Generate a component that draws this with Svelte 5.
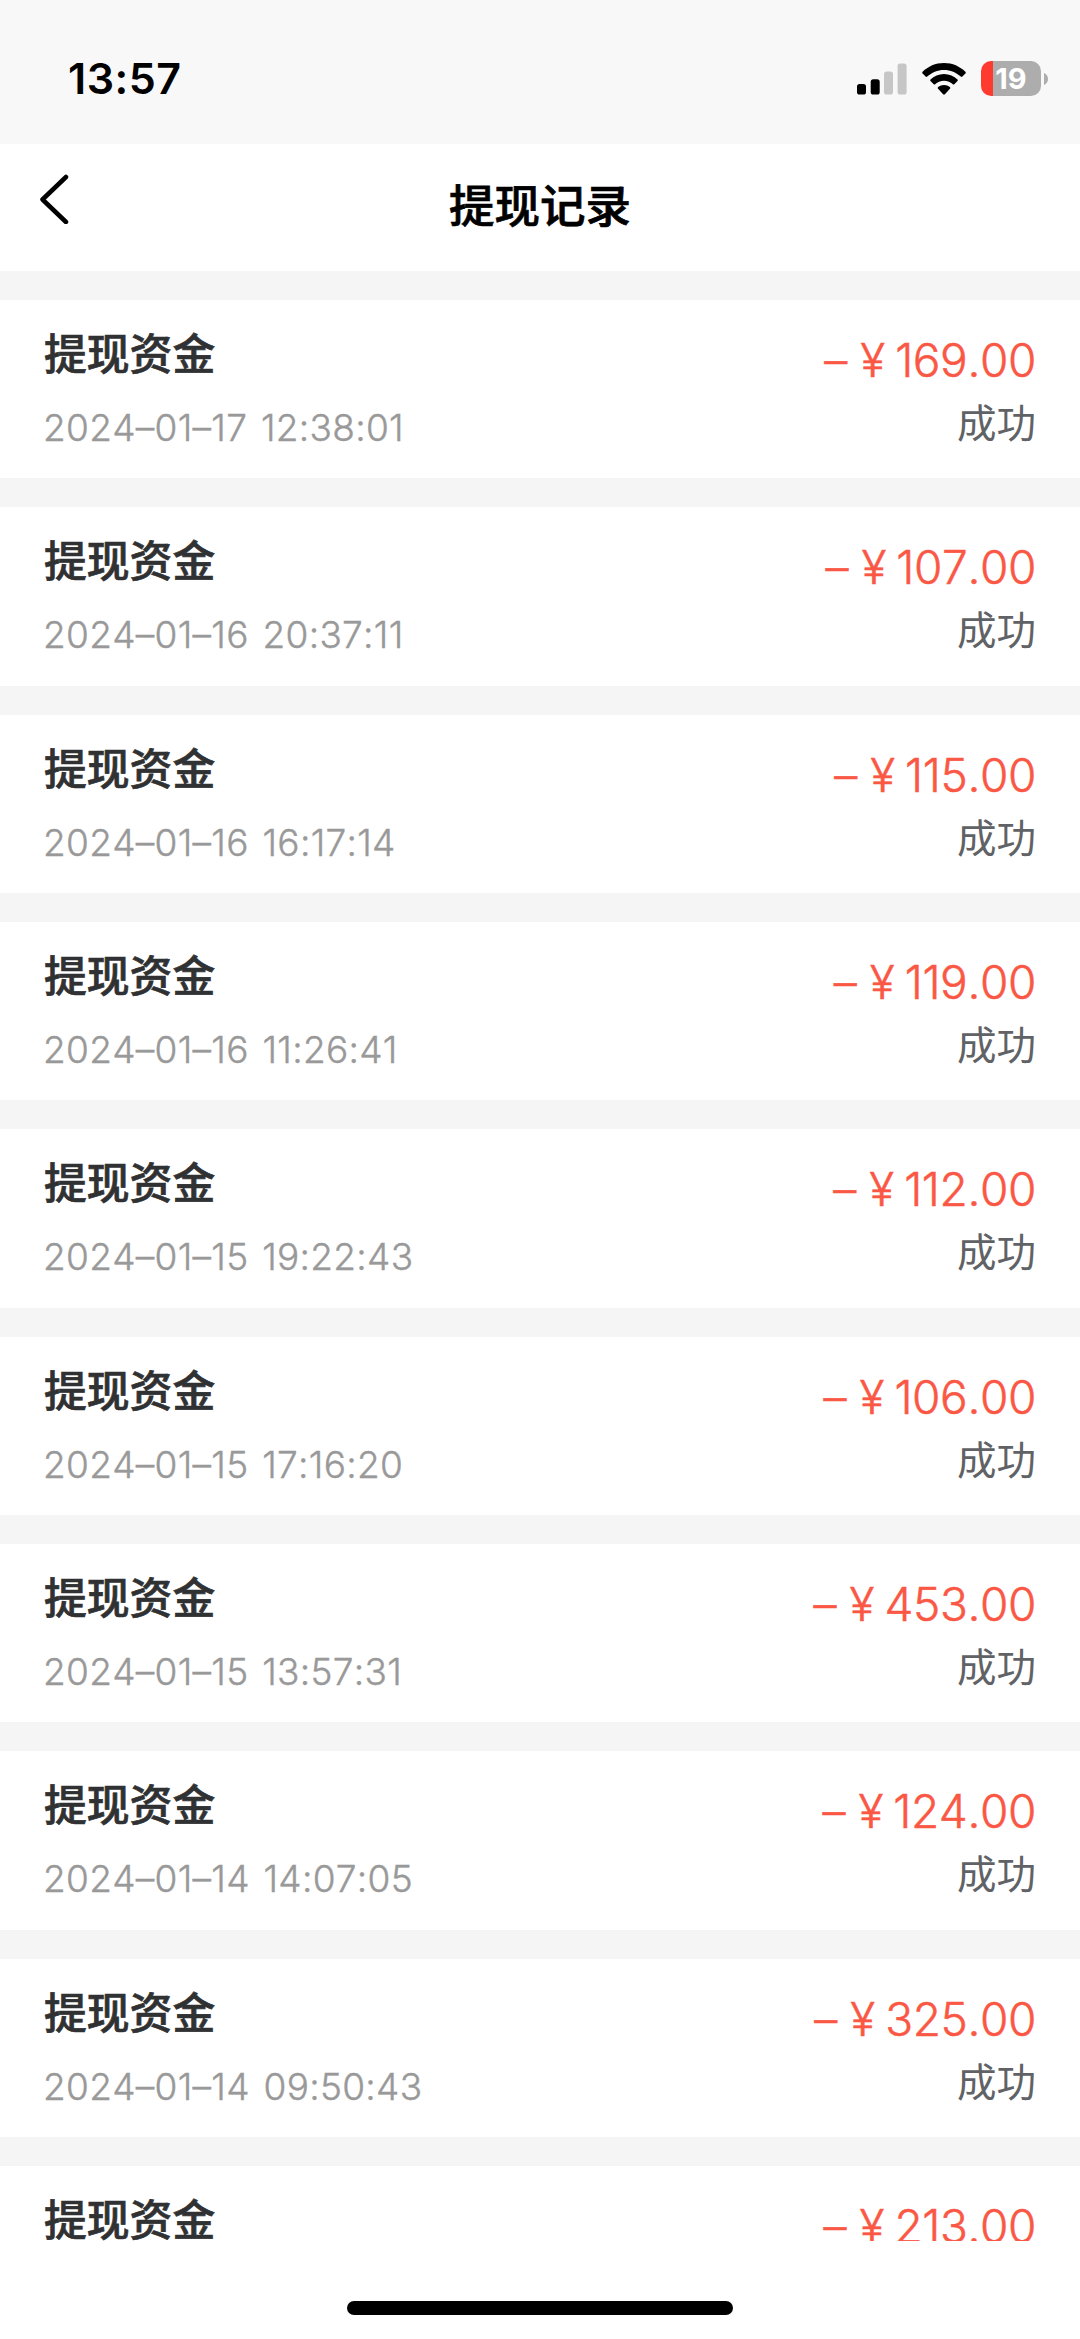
<script lang="ts">
  interface WithdrawRecord {
    time: string;
    amount: string;
  }

  const records: WithdrawRecord[] = [
    { time: "2024–01–17 12:38:01", amount: "169.00" },
    { time: "2024–01–16 20:37:11", amount: "107.00" },
    { time: "2024–01–16 16:17:14", amount: "115.00" },
    { time: "2024–01–16 11:26:41", amount: "119.00" },
    { time: "2024–01–15 19:22:43", amount: "112.00" },
    { time: "2024–01–15 17:16:20", amount: "106.00" },
    { time: "2024–01–15 13:57:31", amount: "453.00" },
    { time: "2024–01–14 14:07:05", amount: "124.00" },
    { time: "2024–01–14 09:50:43", amount: "325.00" },
    { time: "", amount: "213.00" },
  ];
</script>

<div class="screen">
  <div class="status-bar">
    <span class="clock">13:57</span>
    <div class="indicators">
      <svg class="signal" width="50" height="32" viewBox="0 0 50 32">
        <rect x="0" y="21" width="9" height="10.5" rx="2.6" />
        <rect x="13.7" y="16.3" width="9" height="15.2" rx="2.6" />
        <rect class="off" x="27" y="8.5" width="9" height="23" rx="2.6" />
        <rect class="off" x="40.6" y="0.5" width="9" height="31" rx="2.6" />
      </svg>
      <svg class="wifi" width="44" height="32" viewBox="0 0 44 32">
        <path d="M22 0C30.5 0 38 3.4 43.4 8.8Q44.2 9.7 43.4 10.6L40.4 13.6Q39.6 14.3 38.8 13.6C34.4 9.4 28.5 6.9 22 6.9S9.6 9.4 5.2 13.6Q4.4 14.3 3.6 13.6L0.6 10.6Q-0.2 9.7 0.6 8.8C6 3.4 13.5 0 22 0Z" />
        <path d="M22 11C27.3 11 32 13.1 35.5 16.5Q36.3 17.3 35.5 18.1L32.3 21.2Q31.6 21.9 30.8 21.2C28.5 19 25.4 17.7 22 17.7S15.5 19 13.2 21.2Q12.4 21.9 11.7 21.2L8.5 18.1Q7.7 17.3 8.5 16.5C12 13.1 16.7 11 22 11Z" />
        <path d="M22 21.9C24.2 21.9 26.3 22.7 27.9 24.1Q28.7 24.9 27.9 25.8L22.9 31.2Q22 32.1 21.1 31.2L16.1 25.8Q15.3 24.9 16.1 24.1C17.7 22.7 19.8 21.9 22 21.9Z" />
      </svg>
      <div class="battery">
        <div class="cell">19</div>
        <svg width="4" height="12" viewBox="0 0 4 12"><path d="M0 0Q4 1.8 4 6T0 12Z" /></svg>
      </div>
    </div>
  </div>

  <header class="nav">
    <svg class="back" width="30" height="50" viewBox="0 0 30 50">
      <path d="M26 3L2.5 25.5L26 48" />
    </svg>
    <h1>提现记录</h1>
  </header>

  <main class="list">
    {#each records as record}
      <section class="record">
        <div class="info">
          <div class="label">提现资金</div>
          {#if record.time}
            <div class="time">{record.time}</div>
          {/if}
        </div>
        <div class="result">
          <div class="amount">
            <span class="sign">–</span><span class="currency">¥</span><span class="value">{record.amount}</span>
          </div>
          {#if record.time}
            <div class="state">成功</div>
          {/if}
        </div>
      </section>
    {/each}
  </main>

  <footer class="home">
    <div class="home-indicator"></div>
  </footer>
</div>

<style>
  :global(body) {
    background-color: #fff;
  }
  .screen {
    display: flex;
    flex-direction: column;
    width: 1080px;
    height: 2339px;
    overflow: hidden;
    background-color: #fff;
    font-family: Inter, "Noto Sans CJK SC", sans-serif;
  }

  .status-bar {
    display: flex;
    flex: none;
    justify-content: space-between;
    box-sizing: border-box;
    height: 144px;
    padding: 0 32px 0 68px;
    background-color: #f8f8f8;
  }
  .clock {
    height: 157px;
    line-height: 157px;
    font-size: 43px;
    font-weight: 600;
    letter-spacing: 0.5px;
  }
  .indicators {
    display: flex;
    align-items: center;
    height: 157px;
  }
  .wifi {
    margin-left: 15px;
  }
  .off {
    fill: #c6c6c6;
  }
  .battery {
    display: flex;
    align-items: center;
    gap: 3px;
    margin-left: 15px;
    fill: #adadad;
  }
  .cell {
    width: 60px;
    height: 35px;
    border-radius: 10px;
    background: linear-gradient(to right, #ff3b30 12px, #adadad 12px);
    color: #fff;
    font-size: 29px;
    font-weight: 700;
    line-height: 36px;
    text-align: center;
  }

  .nav {
    display: grid;
    flex: none;
    grid-template-columns: 120px 1fr 120px;
    height: 127px;
  }
  .back {
    margin: 30px 0 0 40px;
    fill: none;
    stroke: #000;
    stroke-width: 4.5;
    stroke-linecap: round;
    stroke-linejoin: round;
  }
  h1 {
    margin: 0;
    color: #000;
    font-size: 45.5px;
    font-weight: 500;
    line-height: 125px;
    text-align: center;
    -webkit-text-stroke: 0.7px;
  }

  .list {
    flex: none;
    height: 1970px;
    overflow: hidden;
    background-color: #f5f5f5;
  }
  .record {
    display: flex;
    justify-content: space-between;
    box-sizing: border-box;
    height: 178.33px;
    margin-top: 29px;
    padding: 0 44px 0 43px;
    background-color: #fff;
  }
  .info {
    padding-top: 23px;
  }
  .label {
    padding-left: 1px;
    color: #303133;
    font-size: 42.8px;
    font-weight: 500;
    line-height: 64px;
    -webkit-text-stroke: 0.7px;
  }
  .time {
    margin-top: 13px;
    color: #999;
    font-size: 37px;
    font-weight: 300;
    font-kerning: none;
    letter-spacing: 0.3px;
    line-height: 56px;
    word-spacing: 3px;
    -webkit-text-stroke: 0.4px;
  }
  .result {
    padding-top: 29px;
    text-align: right;
  }
  .amount {
    color: #fa5845;
    font-size: 46px;
    font-weight: 300;
    font-kerning: none;
    line-height: 62px;
    -webkit-text-stroke: 0.5px;
  }
  .currency {
    margin: 0 10px 0 13px;
  }
  .value {
    letter-spacing: -0.4px;
  }
  .state {
    margin-top: 1px;
    color: #606266;
    font-size: 39.5px;
    font-weight: 400;
    line-height: 64px;
  }

  .home {
    display: flex;
    flex: 1;
    align-items: flex-start;
    justify-content: center;
    padding-top: 60px;
    background-color: #fff;
  }
  .home-indicator {
    width: 386px;
    height: 14px;
    border-radius: 7px;
    background-color: #000;
  }
</style>
